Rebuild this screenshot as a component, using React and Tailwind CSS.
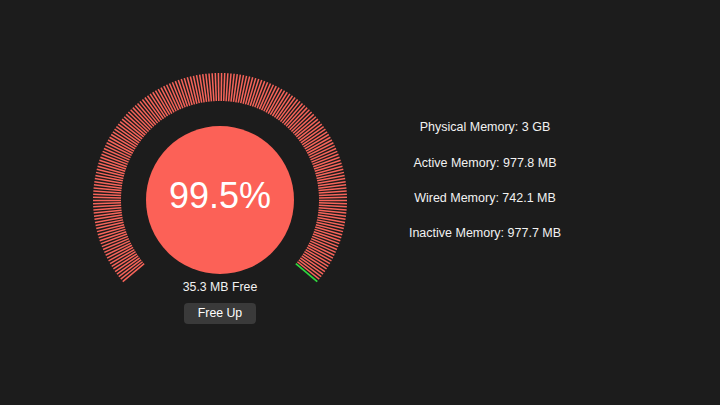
import React from 'react';

const TICKS = 184;
const START = 140;
const SWEEP = 260;

const Gauge = () => {
  const ticks = [];
  for (let i = 0; i < TICKS; i++) {
    const a = ((START + (i * SWEEP) / (TICKS - 1)) * Math.PI) / 180;
    const cos = Math.cos(a);
    const sin = Math.sin(a);
    const last = i === TICKS - 1;
    ticks.push(
      <line
        key={i}
        x1={128 + 99 * cos}
        y1={128 + 99 * sin}
        x2={128 + 127 * cos}
        y2={128 + 127 * sin}
        stroke={last ? '#2fd63f' : '#f7645a'}
        strokeWidth={last ? 1.8 : 1.5}
      />
    );
  }

  return (
    <div className="relative w-[256px] h-[208px] flex justify-center pt-[54px]">
      <svg className="absolute left-0 top-0 overflow-visible" width="256" height="208" viewBox="0 0 256 208">
        {ticks}
      </svg>
      <div className="relative w-[148px] h-[148px] rounded-full bg-[#fc6157] flex items-center justify-center pb-[9px]">
        <span className="text-[36px] leading-[36px] text-white">99.5%</span>
      </div>
    </div>
  );
};

const App = () => {
  const stats = [
    'Physical Memory: 3 GB',
    'Active Memory: 977.8 MB',
    'Wired Memory: 742.1 MB',
    'Inactive Memory: 977.7 MB',
  ];

  return (
    <div
      className="w-[720px] h-[405px] bg-[#1c1c1c] text-[#f2f2f2] flex items-start"
      style={{ fontFamily: '"Liberation Sans", Arial, sans-serif' }}
    >
      {/* Gauge column */}
      <div className="ml-[92px] mt-[72px] w-[256px] flex flex-col items-center">
        <Gauge />
        <p className="text-[12.3px] leading-[15px]">35.3 MB Free</p>
        <button className="mt-[8px] w-[72px] h-[21px] rounded-[4px] bg-[#3a3a3a] text-[12.3px] leading-[21px] text-white">
          Free Up
        </button>
      </div>

      {/* Stats column */}
      <div className="ml-[47px] mt-[120px] w-[180px] flex flex-col items-center gap-[20px]">
        {stats.map((s, i) => (
          <p key={s} className={`text-[12.5px] leading-[15px] whitespace-nowrap ${i === 1 ? 'mt-[1px]' : ''}`}>{s}</p>
        ))}
      </div>
    </div>
  );
};

export default App;
